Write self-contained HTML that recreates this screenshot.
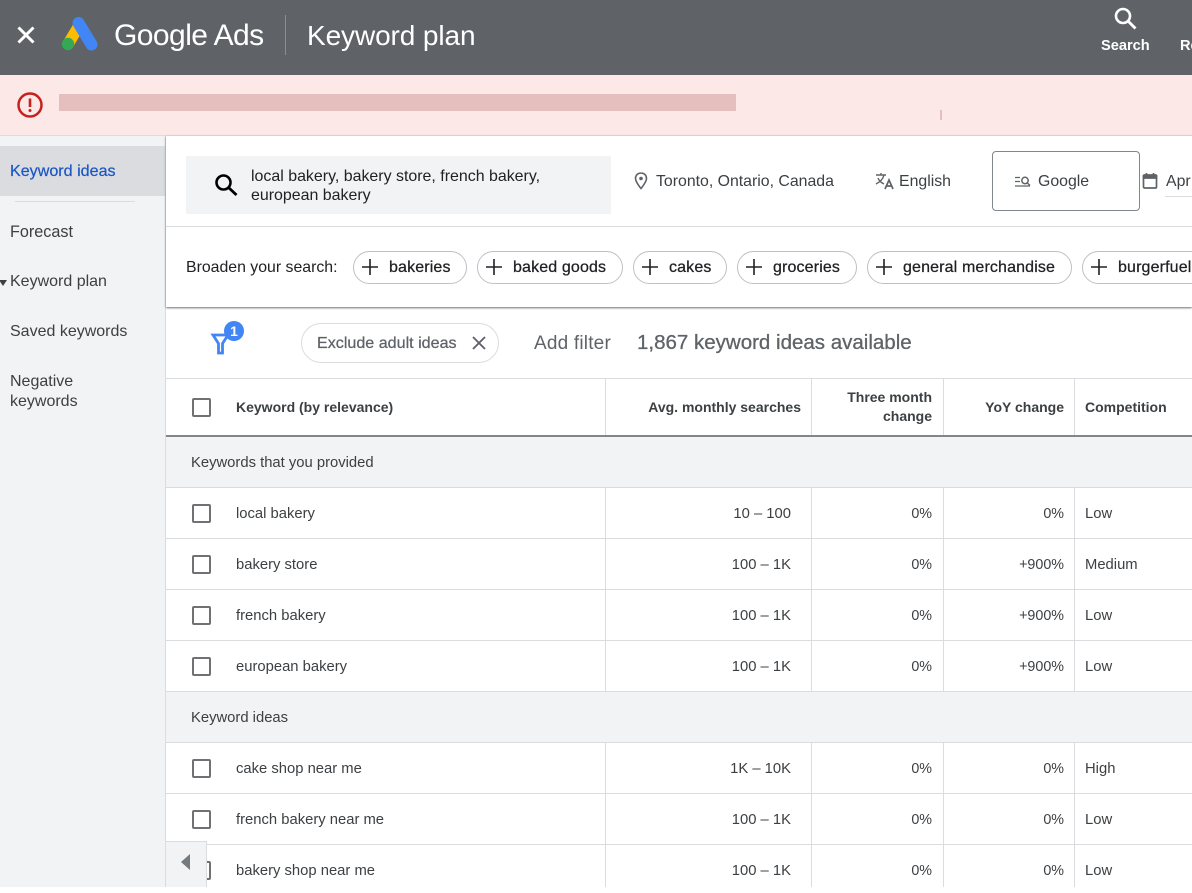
<!DOCTYPE html>
<html><head><meta charset="utf-8"><style>
html,body{margin:0;padding:0;background:#fff}
body{width:1192px;height:893px;position:relative;overflow:hidden;font-family:"Liberation Sans",sans-serif;color:#3c4043;font-size:14.8px}
.a{position:absolute;white-space:nowrap;line-height:20px}
.r{position:absolute;white-space:nowrap;line-height:20px;text-align:right}
.t{margin-top:1px}
.th{font-size:14px;font-weight:700}
.p{font-size:14.3px;margin-top:1px}
.f{font-size:15.85px;margin-top:1px}
.b{position:absolute}
.cb{position:absolute;left:192px;width:15px;height:15px;border:2px solid #6f7174;border-radius:2px;box-sizing:content-box}
.h{position:absolute;left:166px;width:1026px;height:1px;background:#dadce0}
.v{position:absolute;width:1px;background:#dadce0}
.chip{position:absolute;top:251px;height:31px;border:1px solid #bdc1c6;border-radius:17px;background:#fff}
.chip span{position:absolute;left:35px;top:6px;line-height:20px;color:#202124;white-space:nowrap;font-size:16px;letter-spacing:.14px;-webkit-text-stroke:.25px #202124}
.chip svg{position:absolute;left:6px;top:4px}
</style></head><body>
<div class="b" style="left:0;top:0;width:1192px;height:75px;background:#5f6368"></div>
<svg class="b" style="left:15px;top:24px" width="22" height="22" viewBox="0 0 22 22"><path d="M3.5 3.5L18.5 18.5M18.5 3.5L3.5 18.5" stroke="#fff" stroke-width="3" fill="none"/></svg>
<svg class="b" style="left:60px;top:16px" width="40" height="36" viewBox="0 0 40 36"><path d="M14 7L2 27L13 31L22 16Z" fill="#fbbc04"/><circle cx="8" cy="28" r="6.2" fill="#34a853"/><path d="M18.5 7L31.5 28.5" stroke="#4285f4" stroke-width="12" stroke-linecap="round"/></svg>
<div class="a" style="left:114px;top:18px;line-height:36px;font-size:30px;color:#fff;letter-spacing:-.55px">Google Ads</div>
<div class="b" style="left:285px;top:15px;width:1px;height:40px;background:#8a8d91"></div>
<div class="a" style="left:307px;top:18px;line-height:36px;font-size:28px;color:#fff;letter-spacing:-.1px">Keyword plan</div>
<svg class="b" style="left:1112px;top:5px" width="26" height="26" viewBox="0 0 26 26"><circle cx="11" cy="11" r="7" stroke="#fff" stroke-width="2.6" fill="none"/><path d="M16 16L23.5 23.5" stroke="#fff" stroke-width="2.8"/></svg>
<div class="a" style="left:1101px;top:36px;color:#fff;font-weight:700;font-size:14.6px">Search</div>
<div class="a" style="left:1180px;top:36px;color:#fff;font-weight:700;font-size:14.6px">Re</div>

<div class="b" style="left:0;top:75px;width:1192px;height:60px;background:#fce8e6"></div>
<div class="b" style="left:0;top:135px;width:1192px;height:1px;background:#dadce0"></div>
<svg class="b" style="left:17px;top:92px" width="26" height="26" viewBox="0 0 26 26"><circle cx="13" cy="13" r="11.5" stroke="#c5221f" stroke-width="2.5" fill="none"/><path d="M13 6.5v8.5" stroke="#c5221f" stroke-width="2.6"/><circle cx="13" cy="18.5" r="1.5" fill="#c5221f"/></svg>
<div class="b" style="left:59px;top:94px;width:677px;height:17px;background:#e5bfbd"></div>
<div class="b" style="left:940px;top:110px;width:2px;height:10px;background:#e5bfbd"></div>

<div class="b" style="left:0;top:136px;width:166px;height:751px;background:#f1f3f4"></div>
<div class="b" style="left:165px;top:136px;width:1px;height:751px;background:#dadce0"></div>
<div class="b" style="left:0;top:146px;width:165px;height:50px;background:#dadce0"></div>
<div class="a" style="left:10px;top:161px;color:#1a56c4;font-size:16.1px;-webkit-text-stroke:.2px #1a56c4">Keyword ideas</div>
<div class="b" style="left:15px;top:201px;width:120px;height:1px;background:#dadce0"></div>
<div class="a" style="left:10px;top:222px;font-size:16.2px">Forecast</div>
<div class="b" style="left:-1px;top:280px;width:0;height:0;border-left:4px solid transparent;border-right:4px solid transparent;border-top:6px solid #3c4043"></div>
<div class="a" style="left:10px;top:272px;font-size:16px">Keyword plan</div>
<div class="a" style="left:10px;top:322px;font-size:16px">Saved keywords</div>
<div class="a" style="left:10px;top:372px;font-size:16px">Negative</div>
<div class="a" style="left:10px;top:392px;font-size:16px">keywords</div>

<div class="b" style="left:166px;top:136px;width:1026px;height:171px;background:#fff;box-shadow:0 1px 2px rgba(60,64,67,.75)"></div>
<div class="b" style="left:186px;top:156px;width:425px;height:58px;background:#f1f3f4"></div>
<svg class="b" style="left:212px;top:171px" width="28" height="28" viewBox="0 0 28 28"><circle cx="11.5" cy="11.5" r="7" stroke="#000" stroke-width="2.6" fill="none"/><path d="M16.5 16.5L24.5 24" stroke="#000" stroke-width="2.8"/></svg>
<div class="a" style="left:251px;top:167px;line-height:19px;font-size:15.95px;color:#202124;width:320px">local bakery, bakery store, french bakery,<br>european bakery</div>
<svg class="b" style="left:632px;top:171px" width="18" height="20" viewBox="0 0 18 20"><path d="M9 2C5.7 2 3.5 4.4 3.5 7.4 3.5 11 9 17.5 9 17.5S14.5 11 14.5 7.4C14.5 4.4 12.3 2 9 2Z" stroke="#5f6368" stroke-width="1.6" fill="none"/><circle cx="9" cy="7.5" r="1.8" fill="#5f6368"/></svg>
<div class="a f" style="left:656px;top:171px">Toronto, Ontario, Canada</div>
<svg class="b" style="left:874px;top:171px" width="22" height="20" viewBox="0 0 22 20"><path d="M2 4h10M7 2v2M10 4c-1 4-4 7-8 9M4 7c1 3 4 5 6 6" stroke="#5f6368" stroke-width="1.4" fill="none"/><path d="M11 18l4-9 4 9M12.5 15h5" stroke="#5f6368" stroke-width="1.7" fill="none"/></svg>
<div class="a f" style="left:899px;top:171px">English</div>
<div class="b" style="left:992px;top:151px;width:146px;height:58px;border:1px solid #80868b;border-radius:4px"></div>
<svg class="b" style="left:1014px;top:174px" width="18" height="16" viewBox="0 0 18 16"><path d="M1 3.5h5M1 7.5h5M1 12h15" stroke="#5f6368" stroke-width="1.3" fill="none"/><circle cx="11" cy="6.5" r="3.2" stroke="#5f6368" stroke-width="1.5" fill="none"/><path d="M13.3 9L16 11.5" stroke="#5f6368" stroke-width="1.5"/></svg>
<div class="a f" style="left:1038px;top:171px">Google</div>
<svg class="b" style="left:1141px;top:171px" width="18" height="20" viewBox="0 0 18 20"><rect x="2.5" y="4" width="13" height="13" rx="1" stroke="#5f6368" stroke-width="1.7" fill="none"/><path d="M2.5 5h13v2h-13zM5.5 2v3M12.5 2v3" stroke="#5f6368" stroke-width="1.7" fill="#5f6368"/></svg>
<div class="a f" style="left:1166px;top:171px">Apr</div>
<div class="b" style="left:1165px;top:196px;width:27px;height:1px;background:#dadce0"></div>
<div class="b" style="left:166px;top:226px;width:1026px;height:1px;background:#dadce0"></div>

<div class="a f" style="left:186px;top:257px;color:#202124">Broaden your search:</div>
<div class="chip" style="left:353px;width:112px"><svg width="20" height="22" viewBox="0 0 20 22"><path d="M2 11h16M10 3v16" stroke="#202124" stroke-width="1.6"/></svg><span>bakeries</span></div>
<div class="chip" style="left:477px;width:144px"><svg width="20" height="22" viewBox="0 0 20 22"><path d="M2 11h16M10 3v16" stroke="#202124" stroke-width="1.6"/></svg><span>baked goods</span></div>
<div class="chip" style="left:633px;width:92px"><svg width="20" height="22" viewBox="0 0 20 22"><path d="M2 11h16M10 3v16" stroke="#202124" stroke-width="1.6"/></svg><span>cakes</span></div>
<div class="chip" style="left:737px;width:118px"><svg width="20" height="22" viewBox="0 0 20 22"><path d="M2 11h16M10 3v16" stroke="#202124" stroke-width="1.6"/></svg><span>groceries</span></div>
<div class="chip" style="left:867px;width:203px"><svg width="20" height="22" viewBox="0 0 20 22"><path d="M2 11h16M10 3v16" stroke="#202124" stroke-width="1.6"/></svg><span>general merchandise</span></div>
<div class="chip" style="left:1082px;width:140px"><svg width="20" height="22" viewBox="0 0 20 22"><path d="M2 11h16M10 3v16" stroke="#202124" stroke-width="1.6"/></svg><span>burgerfuel</span></div>

<svg class="b" style="left:210px;top:332px" width="22" height="24" viewBox="0 0 22 24"><path d="M3 3h15L12.5 11.5V21h-4V11.5Z" fill="none" stroke="#4285f4" stroke-width="2.8"/></svg>
<div class="b" style="left:224px;top:321px;width:20px;height:20px;border-radius:50%;background:#4285f4;color:#fff;font-size:14px;font-weight:700;text-align:center;line-height:20px">1</div>
<div class="b" style="left:301px;top:323px;width:196px;height:38px;border:1px solid #dadce0;border-radius:20px"></div>
<div class="a" style="left:317px;top:333px;font-size:16.1px;color:#5f6368;-webkit-text-stroke:.25px #5f6368">Exclude adult ideas</div>
<svg class="b" style="left:471px;top:335px" width="16" height="16" viewBox="0 0 16 16"><path d="M2 2L14 14M14 2L2 14" stroke="#5f6368" stroke-width="1.9"/></svg>
<div class="a" style="left:534px;top:334px;font-size:19px;letter-spacing:.2px;color:#5f6368">Add filter</div>
<div class="a" style="left:637px;top:333px;font-size:20.5px;color:#5f6368;-webkit-text-stroke:.3px #5f6368">1,867 keyword ideas available</div>

<div class="h" style="top:378px"></div>
<div class="b" style="left:166px;top:435px;width:1026px;height:2px;background:#80868b"></div>
<div class="b" style="left:166px;top:437px;width:1026px;height:50px;background:#f1f3f4"></div>
<div class="b" style="left:166px;top:692px;width:1026px;height:50px;background:#f1f3f4"></div>
<div class="h" style="top:487px"></div><div class="h" style="top:538px"></div><div class="h" style="top:589px"></div><div class="h" style="top:640px"></div><div class="h" style="top:691px"></div><div class="h" style="top:742px"></div><div class="h" style="top:793px"></div><div class="h" style="top:844px"></div>
<div class="v" style="left:605px;top:379px;height:56px"></div><div class="v" style="left:811px;top:379px;height:56px"></div><div class="v" style="left:943px;top:379px;height:56px"></div><div class="v" style="left:1074px;top:379px;height:56px"></div>
<div class="v" style="left:605px;top:488px;height:203px"></div><div class="v" style="left:811px;top:488px;height:203px"></div><div class="v" style="left:943px;top:488px;height:203px"></div><div class="v" style="left:1074px;top:488px;height:203px"></div>
<div class="v" style="left:605px;top:743px;height:144px"></div><div class="v" style="left:811px;top:743px;height:144px"></div><div class="v" style="left:943px;top:743px;height:144px"></div><div class="v" style="left:1074px;top:743px;height:144px"></div>

<div class="cb" style="top:398px"></div>
<div class="a th" style="left:236px;top:397px">Keyword (by relevance)</div>
<div class="r th" style="right:391px;top:397px">Avg. monthly searches</div>
<div class="r th" style="right:260px;top:388px;line-height:19px">Three month<br>change</div>
<div class="r th" style="right:128px;top:397px">YoY change</div>
<div class="a th" style="left:1085px;top:397px">Competition</div>

<div class="a t" style="left:191px;top:452px">Keywords that you provided</div>
<div class="a t" style="left:191px;top:707px">Keyword ideas</div>

<div class="cb" style="top:504px"></div><div class="a t" style="left:236px;top:503px">local bakery</div><div class="r t" style="right:401px;top:503px">10 – 100</div><div class="r p" style="right:260px;top:503px">0%</div><div class="r p" style="right:128px;top:503px">0%</div><div class="a t" style="left:1085px;top:503px">Low</div>
<div class="cb" style="top:555px"></div><div class="a t" style="left:236px;top:554px">bakery store</div><div class="r t" style="right:401px;top:554px">100 – 1K</div><div class="r p" style="right:260px;top:554px">0%</div><div class="r p" style="right:128px;top:554px">+900%</div><div class="a t" style="left:1085px;top:554px">Medium</div>
<div class="cb" style="top:606px"></div><div class="a t" style="left:236px;top:605px">french bakery</div><div class="r t" style="right:401px;top:605px">100 – 1K</div><div class="r p" style="right:260px;top:605px">0%</div><div class="r p" style="right:128px;top:605px">+900%</div><div class="a t" style="left:1085px;top:605px">Low</div>
<div class="cb" style="top:657px"></div><div class="a t" style="left:236px;top:656px">european bakery</div><div class="r t" style="right:401px;top:656px">100 – 1K</div><div class="r p" style="right:260px;top:656px">0%</div><div class="r p" style="right:128px;top:656px">+900%</div><div class="a t" style="left:1085px;top:656px">Low</div>
<div class="cb" style="top:759px"></div><div class="a t" style="left:236px;top:758px">cake shop near me</div><div class="r t" style="right:401px;top:758px">1K – 10K</div><div class="r p" style="right:260px;top:758px">0%</div><div class="r p" style="right:128px;top:758px">0%</div><div class="a t" style="left:1085px;top:758px">High</div>
<div class="cb" style="top:810px"></div><div class="a t" style="left:236px;top:809px">french bakery near me</div><div class="r t" style="right:401px;top:809px">100 – 1K</div><div class="r p" style="right:260px;top:809px">0%</div><div class="r p" style="right:128px;top:809px">0%</div><div class="a t" style="left:1085px;top:809px">Low</div>
<div class="cb" style="top:861px"></div><div class="a t" style="left:236px;top:860px">bakery shop near me</div><div class="r t" style="right:401px;top:860px">100 – 1K</div><div class="r p" style="right:260px;top:860px">0%</div><div class="r p" style="right:128px;top:860px">0%</div><div class="a t" style="left:1085px;top:860px">Low</div>

<div class="b" style="left:165px;top:841px;width:40px;height:45px;background:#f1f3f4;border:1px solid #dadce0"></div>
<div class="b" style="left:181px;top:854px;width:0;height:0;border-top:8px solid transparent;border-bottom:8px solid transparent;border-right:9px solid #757a80"></div>
<div class="b" style="left:0;top:887px;width:1192px;height:6px;background:#fff"></div>
</body></html>
